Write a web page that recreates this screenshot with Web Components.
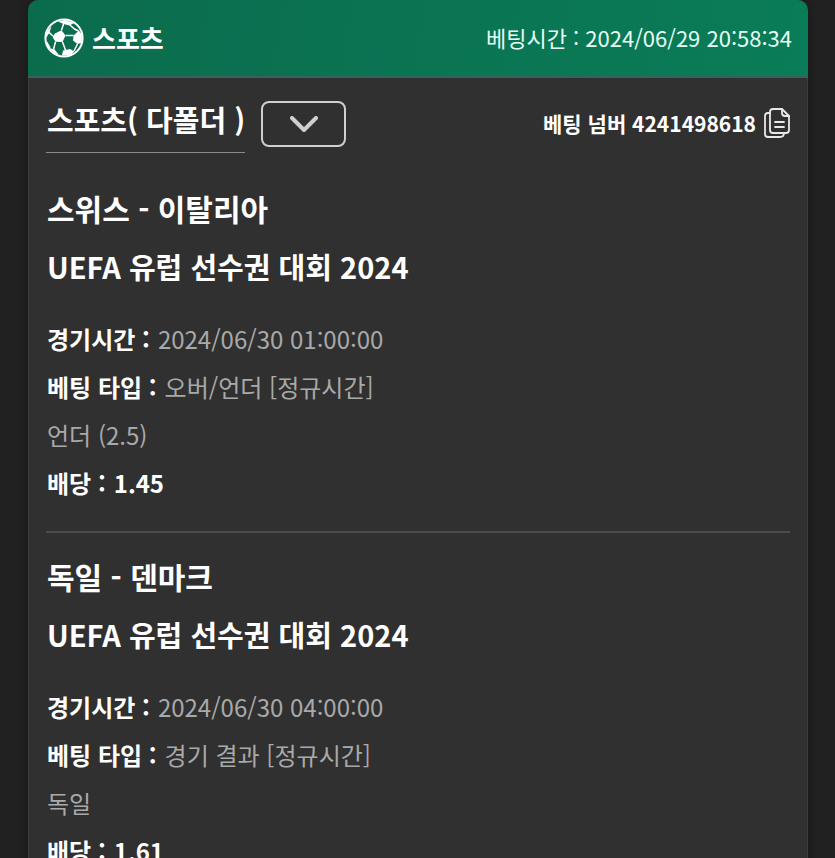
<!DOCTYPE html>
<html lang="ko">
<head>
<meta charset="utf-8">
<meta name="viewport" content="width=device-width, initial-scale=1">
<title>스포츠 베팅 내역</title>
<style>
body {
    margin: 0;
    background-color: #212121;
    color: #fff;
    font-family: "Noto Sans CJK KR", "Noto Sans", sans-serif;
}
</style>
</head>
<body>

<bet-slip>
    <bet-header slot="header" time="2024/06/29 20:58:34">스포츠</bet-header>
    <bet-toolbar number="4241498618">스포츠( 다폴더 )</bet-toolbar>
    <bet-match league="UEFA 유럽 선수권 대회 2024" time="2024/06/30 01:00:00" type="오버/언더 [정규시간]" pick="언더 (2.5)" odds="1.45">스위스 - 이탈리아</bet-match>
    <bet-match league="UEFA 유럽 선수권 대회 2024" time="2024/06/30 04:00:00" type="경기 결과 [정규시간]" pick="독일" odds="1.61">독일 - 덴마크</bet-match>
</bet-slip>

<script>
class BetSlip extends HTMLElement {
    constructor() {
        super();
        this.attachShadow({ mode: "open" });
    }

    connectedCallback() {
        this.shadowRoot.innerHTML = `
<style>
:host {
    display: block;
    padding: 0 27px 0 28px;
}

article {
    border-radius: 10px;
    background-color: #303030;
    box-shadow: 0 0 10px rgba(0, 0, 0, 0.3);
}

.content {
    padding: 22px 17px 0;
    border: 1px solid #3b3e40;
    border-top: 0;
    border-radius: 0 0 10px 10px;
}
</style>
<article>
    <slot name="header"></slot>
    <div class="content"><slot></slot></div>
</article>
`
    }
}

class BetHeader extends HTMLElement {
    constructor() {
        super();
        this.attachShadow({ mode: "open" });
    }

    connectedCallback() {
        this.shadowRoot.innerHTML = `
<style>
:host {
    display: flex;
    align-items: center;
    justify-content: space-between;
    height: 76px;
    padding: 0 16px;
    border-bottom: 2px solid #35625e;
    border-radius: 10px 10px 0 0;
    background: linear-gradient(100deg, #0b6b4d, #0a7c58);
}

h1 {
    display: flex;
    align-items: center;
    gap: 8px;
    margin: 0;
    font-size: 26px;
    line-height: 36px;
    font-weight: 700;
}

svg {
    width: 40px;
    height: 40px;
}

time {
    padding-bottom: 2px;
    font-size: 22px;
    line-height: 32px;
    color: #e6fff5;
}
</style>
<h1>
    <svg viewBox="0 0 40 40" aria-hidden="true">
        <circle cx="20" cy="20" r="18.6" fill="none" stroke="#fff" stroke-width="2"/>
        <g fill="#fff">
            <path d="M11 15.5 17.5 12.3 21.5 17.5 18.5 24 11.5 23.7 8.5 19z"/>
            <path d="M14 3.5 21 2 30 5 25.5 7.5 19.5 6z"/>
            <path d="M29.5 17.5 35 12.5 38 17 37.5 25 33.5 26 29 22.5z"/>
            <path d="M19 32.5 26 31 30.5 33.5 26 37.5 18 37.5z"/>
            <path d="M5.5 30 10.5 31.5 15 37 9 34.5z"/>
            <path d="M2 15 5.5 10.5 7.5 8 5.5 14.5 2 20z"/>
        </g>
        <g fill="none" stroke="#fff" stroke-width="1.5">
            <path d="M17.5 12.3 19.5 6M21.5 17.5 29.5 17.5M18.5 24 21.5 32M11.5 23.7 9.5 31.5M9 18 4.5 14M26 7 30.5 11 34.5 13M33.5 26 30 33M2.5 24 6 30"/>
        </g>
    </svg>
    <slot></slot>
</h1>
<time>베팅시간 : ${this.getAttribute("time")}</time>
`
    }
}

class BetToolbar extends HTMLElement {
    constructor() {
        super();
        this.attachShadow({ mode: "open" });
    }

    connectedCallback() {
        this.shadowRoot.innerHTML = `
<style>
:host {
    display: flex;
    align-items: flex-start;
    justify-content: space-between;
    margin-bottom: 26px;
}

.group {
    display: flex;
    align-items: flex-start;
    gap: 16px;
}

h2 {
    margin: 0;
    padding: 0 0 14px 1px;
    border-bottom: 1px solid #8a8a8a;
    font-size: 29px;
    line-height: 38px;
    font-weight: 700;
}

button {
    display: flex;
    align-items: center;
    justify-content: center;
    padding: 0;
    border: 0;
    background: none;
    color: inherit;
    font: inherit;
    cursor: pointer;
}

.toggle {
    width: 85px;
    height: 46px;
    margin-top: 1px;
    border: 2px solid #cfcfcf;
    border-radius: 8px;
}

.number {
    margin-top: 8px;
    gap: 8px;
    font-size: 21px;
    line-height: 30px;
    font-weight: 700;
}
</style>
<div class="group">
    <h2><slot></slot></h2>
    <button class="toggle" type="button" aria-label="펼치기">
        <svg width="28" height="16" viewBox="0 0 28 16" fill="none" stroke="#cfcfcf" stroke-width="4" stroke-linecap="round" stroke-linejoin="round" aria-hidden="true">
            <path d="M2 2 14 14 26 2"/>
        </svg>
    </button>
</div>
<button class="number" type="button">
    <span>베팅 넘버 ${this.getAttribute("number")}</span>
    <svg width="26" height="30" viewBox="0 0 26 30" fill="none" stroke="#e8e8e8" stroke-width="1.8" stroke-linecap="round" stroke-linejoin="round" aria-hidden="true">
        <path d="M18 1H9Q6 1 6 4V22Q6 25 9 25H22Q25 25 25 22V8z"/>
        <path d="M18 1V5Q18 8 21 8H25"/>
        <path d="M6 5H4Q1 5 1 8V26Q1 29 4 29H16Q20 29 20 25"/>
        <path d="M11 14H20M11 19H20"/>
    </svg>
</button>
`
    }
}

class BetMatch extends HTMLElement {
    constructor() {
        super();
        this.attachShadow({ mode: "open" });
    }

    connectedCallback() {
        this.shadowRoot.innerHTML = `
<style>
:host {
    display: block;
    padding-bottom: 24px;
    margin-bottom: 14px;
    border-bottom: 2px solid #4b4b4b;
}

:host(:last-child) {
    margin-bottom: 0;
    border-bottom: 0;
}

h3, h4, p {
    margin: 0;
    padding: 0 1px;
}

h3, h4 {
    line-height: 58px;
    font-weight: 700;
}

h3 {
    font-size: 30px;
}

h4 {
    font-size: 29px;
}

.info {
    margin-top: 20px;
    font-size: 24px;
    line-height: 48px;
    color: #a9a9a9;
}

p {
    display: flex;
    gap: 8px;
}

b {
    font-weight: 700;
    color: #fff;
}
</style>
<h3><slot></slot></h3>
<h4>${this.getAttribute("league")}</h4>
<div class="info">
    <p><b>경기시간 :</b> <span>${this.getAttribute("time")}</span></p>
    <p><b>베팅 타입 :</b> <span>${this.getAttribute("type")}</span></p>
    <p>${this.getAttribute("pick")}</p>
    <p><b>배당 :</b> <b>${this.getAttribute("odds")}</b></p>
</div>
`
    }
}

customElements.define("bet-slip", BetSlip)
customElements.define("bet-header", BetHeader)
customElements.define("bet-toolbar", BetToolbar)
customElements.define("bet-match", BetMatch)
</script>
</body>
</html>
